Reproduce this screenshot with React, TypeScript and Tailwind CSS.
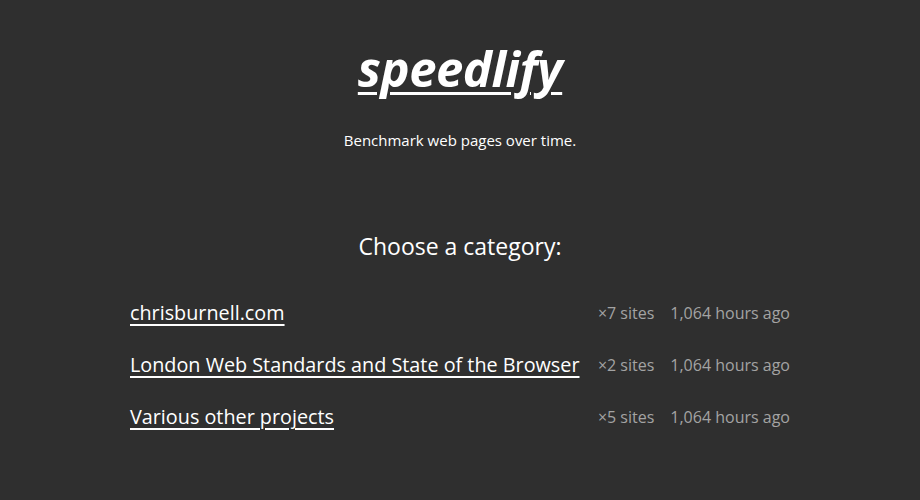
const categories = [
  { name: 'chrisburnell.com', sites: 7 },
  { name: 'London Web Standards and State of the Browser', sites: 2 },
  { name: 'Various other projects', sites: 5 },
]

export default function App() {
  return (
    <div className="min-h-[500px] bg-[#2f2f2f] text-white font-['Open_Sans',sans-serif]">
      <header className="pt-[37px] text-center">
        <h1 className="text-[49px] font-bold italic leading-[62px] tracking-[-0.5px]">
          <a href="#" className="underline decoration-[3px] underline-offset-[5px]">speedlify</a>
        </h1>
        <p className="mt-[31px] text-[15px] leading-5">Benchmark web pages over time.</p>
      </header>

      <main className="mt-[80px]">
        <h2 className="text-center text-[23px] leading-8">Choose a category:</h2>
        <ul className="mx-auto mt-[37px] w-[660px] flex flex-col gap-[24px]">
          {categories.map(cat => (
            <li key={cat.name} className="flex items-center justify-between h-[28px]">
              <a href="#" className="text-[19.8px] underline decoration-[1.5px] underline-offset-[4px]">{cat.name}</a>
              <span className="flex gap-4 text-[16px] text-[#a3a3a3]">
                <span>×{cat.sites} sites</span>
                <span>1,064 hours ago</span>
              </span>
            </li>
          ))}
        </ul>
      </main>
    </div>
  )
}
